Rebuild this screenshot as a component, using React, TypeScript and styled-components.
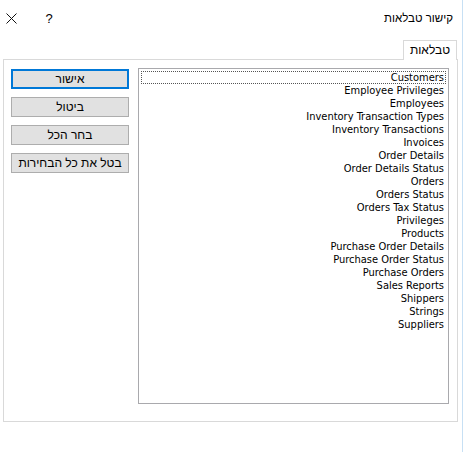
import React from "react";
import styled, { createGlobalStyle } from "styled-components";

const Global = createGlobalStyle`
  html, body { margin: 0; padding: 0; background: #ffffff; }
  body { font-family: "Liberation Sans", "DejaVu Sans", sans-serif; }
`;

const Window = styled.div`
  width: 463px;
  height: 452px;
  box-sizing: border-box;
  background: #ffffff;
  border-right: 1px solid #c7e0f4;
  display: flex;
  flex-direction: column;
`;

const TitleBar = styled.div`
  height: 40px;
  box-sizing: border-box;
  padding: 10px 9px 0 5px;
  display: flex;
  align-items: flex-start;
`;

const IconButton = styled.div<{ $w: number; $gap?: number }>`
  width: ${(p) => p.$w}px;
  margin-left: ${(p) => p.$gap ?? 0}px;
  height: 16px;
  display: flex;
  align-items: center;
  justify-content: center;
  font-size: 13px;
  color: #000;
`;

const Title = styled.div`
  margin-left: auto;
  direction: rtl;
  font-size: 11.5px;
  line-height: 16px;
  color: #000;
`;

const TabRow = styled.div`
  display: flex;
  justify-content: flex-end;
  padding-right: 5px;
  position: relative;
  z-index: 1;
`;

const Tab = styled.div`
  width: 54px;
  height: 20px;
  box-sizing: border-box;
  border: 1px solid #d9d9d9;
  border-bottom: none;
  background: #fff;
  direction: rtl;
  font-size: 12px;
  line-height: 19px;
  text-align: center;
  color: #000;
`;

const Panel = styled.div`
  margin: -1px 4px 0 3px;
  height: 363px;
  box-sizing: border-box;
  border: 1px solid #d9d9d9;
  padding: 8px 8px 17px 7px;
  display: flex;
  gap: 9px;
`;

const ButtonColumn = styled.div`
  width: 118px;
  flex: none;
  display: flex;
  flex-direction: column;
  gap: 8px;
  padding-top: 1px;
`;

const DlgButton = styled.div<{ $default?: boolean }>`
  height: 20px;
  box-sizing: border-box;
  border: ${(p) => (p.$default ? "2px solid #0078d7" : "1px solid #adadad")};
  background: #e1e1e1;
  display: flex;
  align-items: center;
  justify-content: center;
  direction: rtl;
  font-size: 12px;
  color: #000;
`;

const ListBox = styled.div`
  flex: 1;
  box-sizing: border-box;
  border: 1px solid #a9a9ad;
  background: #fff;
  padding: 2px 2px 1px;
  display: flex;
  flex-direction: column;
  font-family: "DejaVu Sans Condensed", "DejaVu Sans", sans-serif;
  font-size: 11px;
`;

const ListItem = styled.div<{ $focused?: boolean }>`
  height: 13px;
  line-height: 13px;
  box-sizing: border-box;
  text-align: right;
  padding-right: 1px;
  color: #000;
  border: 1px ${(p) => (p.$focused ? "dotted #555" : "solid transparent")};
  border-top-width: 0;
  white-space: nowrap;
`;

const items = [
  "Customers",
  "Employee Privileges",
  "Employees",
  "Inventory Transaction Types",
  "Inventory Transactions",
  "Invoices",
  "Order Details",
  "Order Details Status",
  "Orders",
  "Orders Status",
  "Orders Tax Status",
  "Privileges",
  "Products",
  "Purchase Order Details",
  "Purchase Order Status",
  "Purchase Orders",
  "Sales Reports",
  "Shippers",
  "Strings",
  "Suppliers",
];

const FocusTop = styled.div`
  height: 0;
  margin: 0;
  border-top: 1px dotted #555;
  margin-bottom: -1px;
`;

export default function App() {
  return (
    <>
      <Global />
      <Window>
        <TitleBar>
          <IconButton $w={12}>
            <svg width="11" height="11" viewBox="0 0 11 11">
              <path d="M0.5 0.5 L10.5 10.5 M10.5 0.5 L0.5 10.5" stroke="#111" strokeWidth="1" />
            </svg>
          </IconButton>
          <IconButton $w={10} $gap={27}>?</IconButton>
          <Title>קישור טבלאות</Title>
        </TitleBar>
        <TabRow>
          <Tab>טבלאות</Tab>
        </TabRow>
        <Panel>
          <ButtonColumn>
            <DlgButton $default>אישור</DlgButton>
            <DlgButton>ביטול</DlgButton>
            <DlgButton>בחר הכל</DlgButton>
            <DlgButton>בטל את כל הבחירות</DlgButton>
          </ButtonColumn>
          <ListBox>
            <FocusTop />
            {items.map((it, i) => (
              <ListItem key={it} $focused={i === 0}>
                {it}
              </ListItem>
            ))}
          </ListBox>
        </Panel>
      </Window>
    </>
  );
}
